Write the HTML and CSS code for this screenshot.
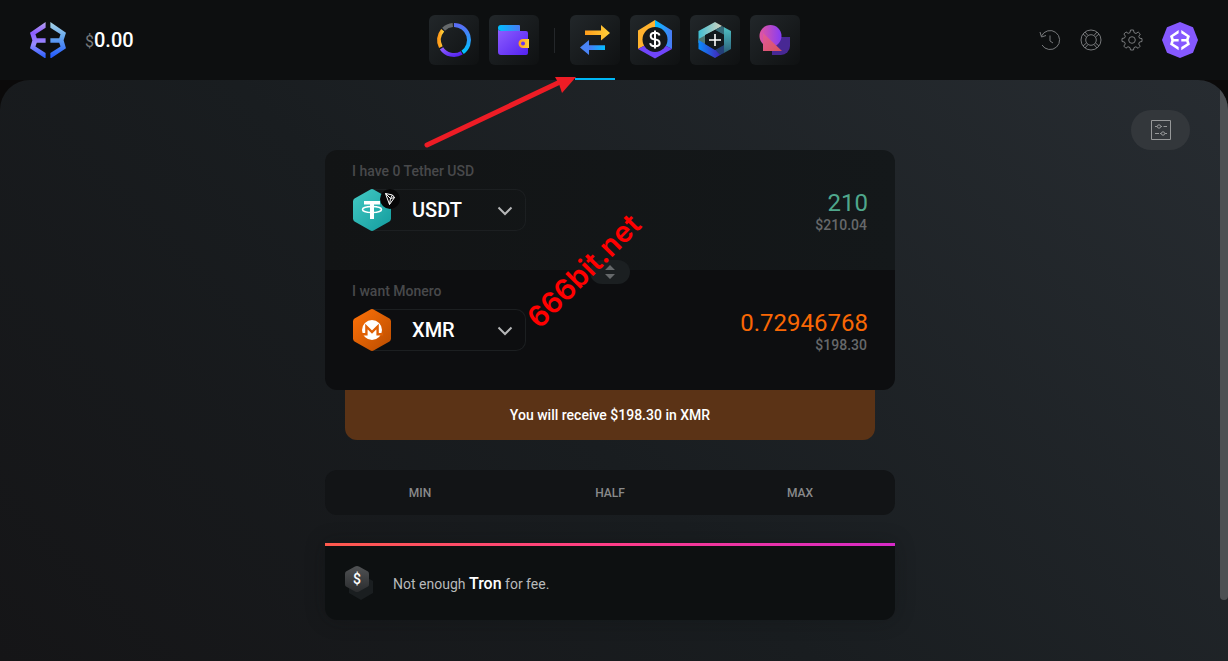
FILE: index.html
```html
<!DOCTYPE html>
<html lang="en">
<head>
  <meta charset="utf-8">
  <meta name="viewport" content="width=device-width, initial-scale=1">
  <title>Exchange</title>
  <link rel="stylesheet" href="styles.css">
</head>
<body>
<svg class="defs" aria-hidden="true">
  <defs>
    <linearGradient id="purple" x1="0" y1="0" x2="1" y2="1"><stop offset="0" stop-color="#8f5fff"/><stop offset="1" stop-color="#5322f0"/></linearGradient>
    <linearGradient id="blue" x1="0" y1="0" x2="1" y2="0"><stop offset="0" stop-color="#00bfff"/><stop offset="1" stop-color="#4a7af5"/></linearGradient>
    <linearGradient id="orange" x1="0" y1="0" x2="1" y2="0"><stop offset="0" stop-color="#ff9c1a"/><stop offset="1" stop-color="#ffd03a"/></linearGradient>
    <linearGradient id="logo-left" x1="0" y1="0" x2="0" y2="1"><stop offset="0" stop-color="#b9a6f0"/><stop offset=".3" stop-color="#8b5cff"/><stop offset=".6" stop-color="#9a8bff"/><stop offset="1" stop-color="#1f5cff"/></linearGradient>
    <linearGradient id="logo-right" x1="0" y1="0" x2="0" y2="1"><stop offset="0" stop-color="#a9d5e6"/><stop offset=".4" stop-color="#68a8ee"/><stop offset="1" stop-color="#1f55ff"/></linearGradient>
    <path id="mark-left" d="M46 0 0 32 7 54 0 77 46 108V91L16 72 20 61H46V48H20L16 36 46 17Z"/>
    <path id="mark-right" d="M60 0 106 32 99 54 106 77 60 108V91L90 72 86 61H60V48H86L90 36 60 17Z"/>
  </defs>
</svg>

<header class="header">
  <div class="brand">
    <a href="#" class="logo" aria-label="Home">
      <svg viewBox="0 0 106 108"><use href="#mark-left" fill="url(#logo-left)"/><use href="#mark-right" fill="url(#logo-right)"/></svg>
    </a>
    <div class="balance"><span class="currency">$</span>0.00</div>
  </div>

  <nav class="nav">
    <a href="#" class="nav-item" aria-label="Portfolio">
      <svg viewBox="0 0 50 50" fill="none" stroke-width="4">
        <defs><linearGradient id="ring" x1="0" y1="0" x2="0" y2="1"><stop offset="0" stop-color="#5a6cf5"/><stop offset="1" stop-color="#00c3ff"/></linearGradient></defs>
        <path stroke="url(#ring)" d="M25 10A15 15 0 0 1 33.600 37.300"/>
        <path stroke="url(#purple)" d="M32.700 37.900A15 15 0 0 1 12.500 33.300"/>
        <path stroke="url(#orange)" d="M11.800 32.100A15 15 0 0 1 13.700 15.200"/>
        <path stroke="#666a6c" d="M14.600 14.200A15 15 0 0 1 23.800 10"/>
      </svg>
    </a>
    <a href="#" class="nav-item" aria-label="Wallet">
      <svg viewBox="0 0 50 50">
        <path fill="url(#purple)" d="M9 13C9 15 10 16 12 16H37Q39 16 39 18V38Q39 40 37 40H12Q9 40 9 37Z"/>
        <path fill="url(#blue)" d="M12 10H30Q31 10 31 11V16H12Q9 16 9 13T12 10Z"/>
        <path fill="url(#orange)" fill-rule="evenodd" d="M40 24V33H34A4.500 4.500 0 0 1 34 24ZM34 26.500A2 2 0 1 0 34 30.500 2 2 0 1 0 34 26.500Z"/>
      </svg>
    </a>
    <span class="nav-divider"></span>
    <a href="#" class="nav-item active" aria-label="Exchange" aria-current="page">
      <svg viewBox="0 0 50 50">
        <path fill="url(#orange)" d="M15 15.500H31V10L40 18 31 25.500V20H15Z"/>
        <path fill="#4a84f5" d="M10 32.500 19 25V30.500H35V35H19V40Z"/>
        <path fill="url(#blue)" transform="rotate(180 27 32.750)" d="M19 30.500H35V35H19Z"/>
      </svg>
    </a>
    <a href="#" class="nav-item" aria-label="Staking">
      <svg viewBox="0 0 50 50">
        <path fill="#ffb22e" d="M25 5V25L8 34V15.500Z"/>
        <path fill="url(#blue)" d="M25 5 42 15.500V34L25 25Z"/>
        <path fill="#7045fa" d="M8 34 25 25 42 34 25 43.500Z"/>
        <circle cx="25" cy="24.500" r="12.500" fill="#15191b"/>
        <path fill="none" stroke="#fff" stroke-width="2" d="M25 15.500V33.500M29.500 20.500Q29 17.800 25 17.800 20.700 17.800 20.700 21T25 24.500 29.600 28 25 31.200 20.400 28.200"/>
      </svg>
    </a>
    <a href="#" class="nav-item" aria-label="Add">
      <svg viewBox="0 0 50 50">
        <defs>
          <linearGradient id="add-top" x1="0" y1="0" x2="1" y2="0"><stop offset="0" stop-color="#3fbfd3"/><stop offset="1" stop-color="#d6d2bd"/></linearGradient>
          <linearGradient id="add-right" x1="0" y1="0" x2="0" y2="1"><stop offset="0" stop-color="#4fc0c4"/><stop offset="1" stop-color="#2a5f78"/></linearGradient>
          <linearGradient id="add-bottom" x1="0" y1="0" x2="1" y2="0"><stop offset="0" stop-color="#0a8cff"/><stop offset="1" stop-color="#4420b4"/></linearGradient>
        </defs>
        <path fill="url(#add-top)" d="M8.500 16 25 7 32 11 15 20.500V25L8.500 28Z"/>
        <path fill="#356a78" d="M32 11 34.500 12.500V20L25 15Z"/>
        <path fill="url(#add-right)" d="M34 12.300 41 16V34L34 38Z"/>
        <path fill="#4d7772" d="M8.500 24 15 20.500V29L8.500 26Z"/>
        <path fill="url(#add-bottom)" d="M8.500 25 25 34.500 31 37V39.500L25 43 8.500 34Z"/>
        <path fill="#233f77" d="M25 34.500 34 29.500V38L30 40Z"/>
        <path fill="#12191d" d="M25 15 34 20V30L25 35 15 29V20Z"/>
        <path stroke="#fff" stroke-width="1.600" d="M25 19V31M19 25H31"/>
      </svg>
    </a>
    <a href="#" class="nav-item" aria-label="Apps">
      <svg viewBox="0 0 50 50">
        <defs>
          <linearGradient id="ball" x1="0" y1="0" x2="1" y2="0"><stop offset="0" stop-color="#e255a0"/><stop offset="1" stop-color="#863cf5"/></linearGradient>
          <linearGradient id="wedge" x1="0" y1="0" x2="1" y2="1"><stop offset="0" stop-color="#e05a9d"/><stop offset="1" stop-color="#d9535b"/></linearGradient>
        </defs>
        <path fill="#482894" d="M22 22H40V31A9 9 0 0 1 31 40H22Z"/>
        <circle cx="20.500" cy="21" r="11" fill="url(#ball)"/>
        <path fill="url(#wedge)" d="M13 18 32 36H13Z"/>
      </svg>
    </a>
    <svg class="pointer" viewBox="0 0 160 80" aria-hidden="true">
      <path fill="none" stroke="#ee1c25" stroke-width="5" stroke-linecap="round" d="M7 75 140 12"/>
      <path fill="#ee1c25" d="M135 7H156L142 23 139 14Z"/>
    </svg>
  </nav>

  <div class="tools">
    <button class="tool" aria-label="History">
      <svg viewBox="0 0 22 22"><path d="M2.500 7A9.500 9.500 0 1 1 3 16M1 3 2.500 8 7 6.500M11 6.500V12L14 14"/></svg>
    </button>
    <button class="tool" aria-label="Support">
      <svg viewBox="0 0 22 22"><circle cx="11" cy="11" r="10"/><circle cx="11" cy="11" r="5.300"/><path d="M3 5 6.500 8M5 3 8 6.500M19 5 15.500 8M17 3 14 6.500M3 17 6.500 14M5 19 8 15.500M19 17 15.500 14M17 19 14 15.500"/></svg>
    </button>
    <button class="tool" aria-label="Settings">
      <svg viewBox="0 0 22 22"><path d="M9.500 1H12.500L13 3.600 15 4.500 17.200 3 19.300 5.100 17.800 7.300 18.500 9.200 21 9.600V12.500L18.500 13 17.700 15 19.200 17.200 17.100 19.300 14.900 17.800 13 18.600 12.500 21H9.500L9 18.600 7 17.700 4.900 19.200 2.800 17.100 4.300 14.900 3.500 13 1 12.500V9.500L3.500 9 4.400 7.200 2.900 5 5 2.900 7.200 4.400 9 3.600Z"/><circle cx="11" cy="11" r="3.300"/></svg>
    </button>
    <button class="avatar" aria-label="Profile">
      <svg viewBox="0 0 36 36">
        <path fill="#8558ff" d="M18 0 31 5.300 36 18 31 30.700 18 36 5 30.700 0 18 5 5.300Z"/>
        <g fill="#fff" transform="translate(8 8) scale(.188)"><use href="#mark-left"/><use href="#mark-right"/></g>
      </svg>
    </button>
  </div>
</header>

<main class="main">
  <div class="toolbar">
    <button class="filter" aria-label="Exchange options">
      <svg viewBox="0 0 20 20"><path d="M.5.500H19.500V19.500H.5ZM4 6.500H6M10 6.500H11M12.500 6.500H16M4 13.500H8M9 13.500H10M14 13.500H16"/><circle cx="8" cy="6.500" r="1.700"/><circle cx="12" cy="13.500" r="1.700"/></svg>
    </button>
  </div>

  <form class="exchange">
    <div class="pair">
      <div class="side">
        <div class="asset">
          <label class="label" for="from">I have 0 Tether USD</label>
          <div class="picker">
            <svg class="coin" viewBox="0 0 38 42">
              <defs><linearGradient id="tether" x1="0" y1="0" x2="1" y2="1"><stop offset="0" stop-color="#43c9c3"/><stop offset="1" stop-color="#129c9e"/></linearGradient></defs>
              <path fill="url(#tether)" d="M17 .7Q19-.5 21 .7L36.500 9.500Q38 10.500 38 12.500V29.500Q38 31.500 36.500 32.500L21 41.300Q19 42.500 17 41.300L1.500 32.500Q0 31.500 0 29.500V12.500Q0 10.500 1.500 9.500Z"/>
              <path fill="#fff" d="M11 12H27V15.500H21V30H17V15.500H11Z"/>
              <ellipse cx="19" cy="20.500" rx="9.500" ry="3" fill="none" stroke="#fff" stroke-width="1.500"/>
            </svg>
            <svg class="network" viewBox="0 0 20 20"><circle cx="10" cy="10" r="10" fill="#060607"/><path fill="none" stroke="#fff" d="M5.500 4.500 12.500 6 14.500 8.500 9.500 15.500ZM5.500 4.500 10.500 9.500 14.500 8.500M10.500 9.500 12.500 6M10.500 9.500 9.500 15.500"/></svg>
            <select id="from"><option>USDT</option></select>
            <svg class="chevron" viewBox="0 0 16 10"><path d="M1.500 1.500 8 8 14.500 1.500"/></svg>
          </div>
        </div>
        <div class="amount">
          <input class="value have" type="text" aria-label="Amount to send" value="210">
          <span class="fiat">$210.04</span>
        </div>
      </div>

      <div class="side want-side">
        <div class="asset">
          <label class="label" for="to">I want Monero</label>
          <div class="picker">
            <svg class="coin" viewBox="0 0 38 42">
              <defs><linearGradient id="monero" x1="0" y1="0" x2="1" y2="1"><stop offset="0" stop-color="#ff7208"/><stop offset="1" stop-color="#b94c00"/></linearGradient></defs>
              <path fill="url(#monero)" d="M17 .7Q19-.5 21 .7L36.500 9.500Q38 10.500 38 12.500V29.500Q38 31.500 36.500 32.500L21 41.300Q19 42.500 17 41.300L1.500 32.500Q0 31.500 0 29.500V12.500Q0 10.500 1.500 9.500Z"/>
              <circle cx="19" cy="21" r="10" fill="#fff"/>
              <path fill="none" stroke="#e06004" stroke-width="2.400" d="M8 25.200H13.400V17.500L19 23 24.600 17.500V25.200H30"/>
            </svg>
            <select id="to"><option>XMR</option></select>
            <svg class="chevron" viewBox="0 0 16 10"><path d="M1.500 1.500 8 8 14.500 1.500"/></svg>
          </div>
        </div>
        <div class="amount">
          <input class="value want" type="text" aria-label="Amount to receive" value="0.72946768">
          <span class="fiat">$198.30</span>
        </div>
      </div>

      <button type="button" class="swap" aria-label="Swap assets">
        <svg viewBox="0 0 10 14"><path d="M5 0 10 5H0ZM0 9H10L5 14Z"/></svg>
      </button>
      <span class="watermark">666bit.net</span>
    </div>

    <div class="receive">You will receive $198.30 in XMR</div>

    <div class="presets">
      <button type="button">MIN</button>
      <button type="button">HALF</button>
      <button type="button">MAX</button>
    </div>

    <div class="alert" role="alert">
      <svg class="fee-icon" viewBox="0 0 30 36">
        <defs><linearGradient id="fee" x1="0" y1="0" x2="0" y2="1"><stop offset="0" stop-color="#505254"/><stop offset="1" stop-color="#2a2c2e"/></linearGradient></defs>
        <path fill="#1a1e20" d="M17 9 29 16V28L17 35 5 28V16Z"/>
        <path fill="url(#fee)" d="M11 1.500Q13 .3 15 1.500L24 6.500Q25 7 25 9V19Q25 21 24 21.500L15 26.500Q13 27.700 11 26.500L2 21.500Q1 21 1 19V9Q1 7 2 6.500Z"/>
        <text x="13" y="19" text-anchor="middle">$</text>
      </svg>
      <p>Not enough <strong>Tron</strong> for fee.</p>
    </div>
  </form>
  <div class="scrollbar"></div>
</main>
</body>
</html>
```
FILE: styles.css
```css
* {
    box-sizing: border-box;
}

body {
    margin: 0;
    min-height: 100vh;
    display: flex;
    flex-direction: column;
    background: #0b0a0a;
    color: #fff;
    font-family: Roboto, "Liberation Sans", sans-serif;
    font-size: 14px;
    overflow: hidden;
}

button, input, select {
    font: inherit;
    color: inherit;
    border: 0;
    padding: 0;
    background: none;
}

button {
    cursor: pointer;
}

svg {
    display: block;
}

.defs {
    position: absolute;
    width: 0;
    height: 0;
}

/* Header */
.header {
    height: 80px;
    padding: 0 30px;
    display: grid;
    grid-template-columns: 1fr auto 1fr;
    align-items: center;
    background: #0d0f10;
}

.brand {
    display: flex;
    align-items: center;
    gap: 19px;
}

.logo {
    width: 36px;
}

.balance {
    font-size: 20px;
    font-weight: 500;
}

.currency {
    font-size: 16px;
    font-weight: 400;
    color: #77797b;
}

.nav {
    position: relative;
    display: flex;
    align-items: center;
    gap: 10px;
}

.nav-item {
    position: relative;
    width: 50px;
    height: 50px;
    border-radius: 6px;
    background: linear-gradient(135deg, #22272a, #0f1112);
}

.nav-item.active::after {
    content: '';
    position: absolute;
    left: 5px;
    right: 5px;
    bottom: -15px;
    height: 2px;
    background: #00b7f5;
}

.nav-divider {
    width: 1px;
    height: 25px;
    margin: 0 5px;
    background: #24272a;
}

.pointer {
    position: absolute;
    z-index: 2;
    left: -9px;
    top: 55px;
    width: 160px;
    height: 80px;
    pointer-events: none;
}

.tools {
    display: flex;
    align-items: center;
    justify-content: flex-end;
    gap: 19px;
}

.tool {
    width: 22px;
    fill: none;
    stroke: #77797b;
    stroke-width: 1;
}

.avatar {
    width: 36px;
}

/* Page */
.main {
    position: relative;
    flex: 1;
    padding: 30px 38px 40px 30px;
    border-radius: 30px 30px 0 0;
    background: linear-gradient(45deg, #151517, #191d20 45%, #272c31);
    overflow: hidden;
}

.scrollbar {
    position: absolute;
    top: 0;
    right: 0;
    width: 8px;
    height: 520px;
    border-radius: 4px;
    background: #4c5053;
}

.toolbar {
    display: flex;
    justify-content: flex-end;
}

.filter {
    display: grid;
    place-items: center;
    width: 59px;
    height: 40px;
    border-radius: 20px;
    background: #33373b;
}

.filter svg {
    width: 20px;
    fill: none;
    stroke: #969899;
}

.exchange {
    max-width: 570px;
    margin: 0 auto;
}

.pair {
    position: relative;
}

.side {
    display: flex;
    justify-content: space-between;
    height: 120px;
    padding: 12px 27px 0;
    border-radius: 12px 12px 0 0;
    background: linear-gradient(to right, #121415, #14181a);
}

.want-side {
    border-radius: 0 0 12px 12px;
    background: #0d0e10;
}

.label {
    display: block;
    line-height: 18px;
    margin-bottom: 9px;
    font-weight: 500;
    color: #48494b;
}

.picker {
    position: relative;
    width: 174px;
}

.picker select {
    width: 154px;
    height: 42px;
    margin-left: 20px;
    padding-left: 40px;
    border: 1px solid #1c1f21;
    border-left: 0;
    border-radius: 0 10px 10px 0;
    appearance: none;
    font-size: 20px;
    font-weight: 500;
}

.coin {
    position: absolute;
    left: 1px;
    top: 0;
    width: 38px;
    height: 42px;
}

.network {
    position: absolute;
    left: 28px;
    top: 0;
    width: 20px;
}

.chevron {
    position: absolute;
    right: 13px;
    top: 17px;
    width: 16px;
    fill: none;
    stroke: #b5b6b7;
    stroke-width: 2;
    pointer-events: none;
}

.amount {
    display: flex;
    flex-direction: column;
    align-items: flex-end;
    padding-top: 28px;
}

.value {
    width: 220px;
    height: 26px;
    text-align: right;
    font-size: 24px;
}

.have {
    color: #4fa78c;
}

.want {
    color: #f96704;
}

.fiat {
    line-height: 18px;
    padding-right: 1px;
    font-weight: 500;
    color: #66686a;
}

.swap {
    position: absolute;
    left: calc(50% - 20px);
    top: 110px;
    display: grid;
    place-items: center;
    width: 40px;
    height: 24px;
    border-radius: 12px;
    background: #1b1f21;
}

.swap svg {
    width: 10px;
    fill: #66696b;
}

.watermark {
    position: absolute;
    left: 50%;
    top: 50%;
    transform: translate(-99px, -15px) rotate(-45deg);
    font: 600 29px/32px Inter, sans-serif;
    color: #f00;
    pointer-events: none;
}

.receive {
    margin: 0 20px;
    padding: 16px;
    line-height: 18px;
    border-radius: 0 0 12px 12px;
    background: #5b3316;
    text-align: center;
    font-weight: 500;
}

.presets {
    display: grid;
    grid-template-columns: repeat(3, 1fr);
    margin: 30px 0 28px;
    border-radius: 12px;
    background: #121416;
}

.presets button {
    height: 45px;
    font-size: 12px;
    font-weight: 500;
    color: #898a8b;
}

.alert {
    display: flex;
    align-items: center;
    gap: 19px;
    height: 77px;
    padding: 3px 19px 0;
    border-radius: 0 0 12px 12px;
    background: linear-gradient(to right, #ff5a4d, #ff3d88 50%, #d62ac8) top / 100% 3px no-repeat, #0d1011;
    box-shadow: 0 0 20px rgba(13, 16, 17, .3);
}

.fee-icon {
    width: 30px;
    height: 36px;
}

.fee-icon text {
    fill: #fff;
    font-size: 14px;
    font-weight: 500;
}

.alert p {
    margin: 0;
    color: #b8babb;
}

.alert strong {
    font-size: 16px;
    font-weight: 500;
    color: #fff;
}
```
